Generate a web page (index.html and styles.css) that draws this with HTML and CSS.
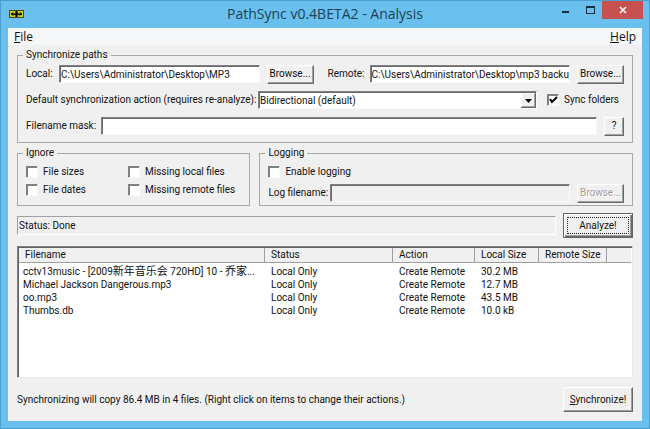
FILE: index.html
```html
<!DOCTYPE html>
<html lang="en">
<head>
    <meta charset="UTF-8">
    <meta name="viewport" content="width=device-width, initial-scale=1.0">
    <title>PathSync v0.4BETA2 - Analysis</title>
    <link rel="stylesheet" href="styles.css">
</head>
<body>
    <div class="window">
        <header class="titlebar">
            <svg class="app-icon" width="15" height="8" viewBox="0 0 15 8">
                <rect width="15" height="8" fill="#4a4a14"/>
                <path d="M1 1h5v6H1zM9 1h5v6H9z" fill="#d0ce22"/>
                <path d="M3 2h2v1H3zM3 5h2v1H3zM10 2h2v1h-2zM10 5h2v1h-2z" fill="#8f8d20"/>
                <path d="M2 3h11v2H2zM7 1h1v6H7z" fill="#111"/>
                <path d="M4 3h2v1H4zM9 3h2v1H9z" fill="#6f6d18"/>
            </svg>
            <h1 class="title">PathSync v0.4BETA2 - Analysis</h1>
            <div class="window-buttons">
                <button type="button" class="win-btn" aria-label="Minimize">
                    <svg width="8" height="8" viewBox="0 0 8 8"><path d="M0 5h7v2H0z" fill="#14303f"/></svg>
                </button>
                <button type="button" class="win-btn" aria-label="Maximize">
                    <svg width="9" height="8" viewBox="0 0 9 8"><path d="M0 0h9v8H0zM1 2v5h7V2z" fill="#14303f" fill-rule="evenodd"/></svg>
                </button>
                <button type="button" class="win-btn close" aria-label="Close">
                    <svg width="8" height="8" viewBox="0 0 8 8"><path d="M1 1l6 6M7 1L1 7" stroke="#fff" stroke-width="1.6"/></svg>
                </button>
            </div>
        </header>

        <main class="client">
            <nav class="menu">
                <button type="button"><u>F</u>ile</button>
                <button type="button"><u>H</u>elp</button>
            </nav>

            <form class="content">
                <fieldset class="group paths">
                    <legend>Synchronize paths</legend>
                    <div class="row">
                        <label class="local-label" for="local">Local:</label>
                        <input class="field" type="text" id="local" value="C:\Users\Administrator\Desktop\MP3">
                        <button type="button" class="btn browse">Browse...</button>
                        <label class="remote-label" for="remote">Remote:</label>
                        <input class="field" type="text" id="remote" value="C:\Users\Administrator\Desktop\mp3 backup">
                        <button type="button" class="btn browse">Browse...</button>
                    </div>
                    <div class="row">
                        <label class="action-label" for="action">Default synchronization action (requires re-analyze):</label>
                        <select class="field" id="action">
                            <option>Bidirectional (default)</option>
                        </select>
                        <label class="check sync-folders"><input type="checkbox" checked>Sync folders</label>
                    </div>
                    <div class="row">
                        <label class="mask-label" for="mask">Filename mask:</label>
                        <input class="field" type="text" id="mask">
                        <button type="button" class="btn help">?</button>
                    </div>
                </fieldset>

                <div class="groups">
                    <fieldset class="group ignore">
                        <legend>Ignore</legend>
                        <div class="checks">
                            <label class="check"><input type="checkbox">File sizes</label>
                            <label class="check"><input type="checkbox">Missing local files</label>
                            <label class="check"><input type="checkbox">File dates</label>
                            <label class="check"><input type="checkbox">Missing remote files</label>
                        </div>
                    </fieldset>
                    <fieldset class="group logging">
                        <legend>Logging</legend>
                        <label class="check"><input type="checkbox">Enable logging</label>
                        <div class="row">
                            <label class="log-label" for="log">Log filename:</label>
                            <input class="field" type="text" id="log" disabled>
                            <button type="button" class="btn browse" disabled>Browse...</button>
                        </div>
                    </fieldset>
                </div>

                <div class="status-row">
                    <div class="status">Status: Done</div>
                    <button type="button" class="btn large default"><span>Analyze!</span></button>
                </div>

                <div class="list">
                    <table>
                        <colgroup>
                            <col class="col-name">
                            <col class="col-status">
                            <col class="col-action">
                            <col class="col-local">
                            <col class="col-remote">
                            <col>
                        </colgroup>
                        <thead>
                            <tr><th>Filename</th><th>Status</th><th>Action</th><th>Local Size</th><th>Remote Size</th><th></th></tr>
                        </thead>
                        <tbody>
                            <tr><td>cctv13music - [2009<span class="cjk">新年音乐会</span> 720HD] 10 - <span class="cjk">乔家</span>...</td><td>Local Only</td><td>Create Remote</td><td>30.2 MB</td><td></td><td></td></tr>
                            <tr><td>Michael Jackson Dangerous.mp3</td><td>Local Only</td><td>Create Remote</td><td>12.7 MB</td><td></td><td></td></tr>
                            <tr><td>oo.mp3</td><td>Local Only</td><td>Create Remote</td><td>43.5 MB</td><td></td><td></td></tr>
                            <tr><td>Thumbs.db</td><td>Local Only</td><td>Create Remote</td><td>10.0 kB</td><td></td><td></td></tr>
                        </tbody>
                    </table>
                </div>

                <div class="footer">
                    <span>Synchronizing will copy 86.4 MB in 4 files. (Right click on items to change their actions.)</span>
                    <button type="button" class="btn large"><span><u>S</u>ynchronize!</span></button>
                </div>
            </form>
        </main>
    </div>
</body>
</html>
```
FILE: styles.css
```css
* {
    box-sizing: border-box;
}

body {
    margin: 0;
    font: 10px/14px Roboto, "Noto Sans CJK SC", sans-serif;
    color: #111;
}

button,
input,
select {
    font: inherit;
    color: inherit;
    margin: 0;
}

.window {
    display: flex;
    flex-direction: column;
    min-height: 100vh;
    padding: 0 6px 7px;
    border: 1px solid #4a9fcf;
    background: #69c0ee;
}

/* title bar */
.titlebar {
    display: grid;
    grid-template-columns: 1fr auto 1fr;
    height: 27px;
}

.app-icon {
    margin: 9px 0 0 2px;
}

.title {
    margin: 0;
    font: 14px/26px "Open Sans", "Noto Sans", sans-serif;
    color: #1d4155;
}

.window-buttons {
    display: flex;
    justify-content: flex-end;
}

.win-btn {
    display: flex;
    align-items: center;
    justify-content: center;
    width: 24px;
    height: 18px;
    padding: 0;
    border: 0;
    background: none;
}

.win-btn.close {
    width: 41px;
    background: #c75050;
}

/* client area */
.client {
    flex: 1;
    display: flex;
    flex-direction: column;
    margin: 0 1px;
    background: #f0f0f0;
}

.menu {
    display: flex;
    justify-content: space-between;
    height: 17px;
    padding: 0 6px;
    background: #f5f6f7;
}

.menu button {
    padding: 0;
    border: 0;
    background: none;
    font: 12px/18px "Open Sans", "Noto Sans", sans-serif;
}

.content {
    flex: 1;
    display: flex;
    flex-direction: column;
    padding: 3px 9px 9px;
}

.group {
    min-width: 0;
    margin: 0;
    padding: 3px 8px 7px;
    border: 1px solid #a8a8a8;
}

.group legend {
    margin-left: -3px;
    padding: 0 3px;
}

.row {
    display: flex;
    align-items: center;
    height: 18px;
}

.row + .row {
    margin-top: 8px;
}

.field {
    flex: 1;
    min-width: 0;
    height: 18px;
    padding: 1px 0 0 1px;
    border: 1px solid;
    border-color: #808080 #fafafa #fafafa #808080;
    border-radius: 0;
    box-shadow: inset 1px 1px #6a6a6a;
    background: #fff;
    outline: 0;
}

.field:disabled {
    background: #f0f0f0;
}

select.field {
    appearance: none;
    background: #fff url("data:image/svg+xml,%3Csvg xmlns='http://www.w3.org/2000/svg' width='15' height='15'%3E%3Cpath d='M0 0h15v15H0z' fill='%23696969'/%3E%3Cpath d='M0 0h14v14H0z' fill='%23fff'/%3E%3Cpath d='M1 1h13v13H1z' fill='%23a0a0a0'/%3E%3Cpath d='M1 1h12v12H1z' fill='%23f0f0f0'/%3E%3Cpath d='M4 6h7L7.500 10z' fill='%23000'/%3E%3C/svg%3E") no-repeat right center;
}

.local-label { width: 33px; }
.remote-label { width: 42px; margin-left: 14px; }
.action-label { width: 232px; }
.mask-label { width: 75px; }
.log-label { width: 62px; }

label {
    flex: none;
    white-space: nowrap;
}

.btn {
    flex: none;
    height: 19px;
    padding: 0;
    border: 1px solid;
    border-color: #fff #696969 #696969 #fff;
    box-shadow: inset -1px -1px #a0a0a0;
    background: #f0f0f0;
}

.btn:disabled {
    color: #a0a0a0;
    text-shadow: 1px 1px #fff;
}

.browse {
    width: 47px;
    margin-left: 7px;
}

.help {
    width: 20px;
    margin-left: 7px;
}

.large {
    width: 70px;
    height: 25px;
}

.default {
    padding: 1px;
    border-color: #646464;
    box-shadow: inset 1px 1px #fff, inset -1px -1px #696969, inset -2px -2px #a0a0a0;
}

.default span {
    display: block;
    margin: 0 2px;
    border: 1px dotted #222;
    line-height: 15px;
}

.check {
    display: flex;
    align-items: center;
    gap: 5px;
}

.check input {
    flex: none;
    appearance: none;
    width: 12px;
    height: 12px;
    border: 1px solid;
    border-color: #808080 #fafafa #fafafa #808080;
    box-shadow: inset 1px 1px #808080;
    background: #fff;
}

.check input:checked {
    background: #fff url("data:image/svg+xml,%3Csvg xmlns='http://www.w3.org/2000/svg' width='10' height='10'%3E%3Cpath d='M2 4l2 3 5-5' fill='none' stroke='%23000' stroke-width='2'/%3E%3C/svg%3E") center no-repeat;
}

.sync-folders {
    width: 77px;
    margin-left: 10px;
}

/* ignore + logging */
.groups {
    display: grid;
    grid-template-columns: 233fr 373fr;
    gap: 9px;
    margin-top: 3px;
}

.groups .group {
    padding-top: 5px;
    padding-bottom: 3px;
}

.checks {
    display: grid;
    grid-template-columns: 102px 1fr;
    gap: 4px 0;
}

.logging .row {
    margin-top: 5px;
}

.status-row,
.footer {
    display: flex;
    align-items: center;
    justify-content: space-between;
    gap: 7px;
}

.status-row {
    margin: 7px 0 8px;
}

.status {
    flex: 1;
    height: 19px;
    padding: 2px 1px;
    border: 1px solid;
    border-color: #a0a0a0 #fff #fff #a0a0a0;
}

/* file list */
.list {
    flex: 1;
    border: 1px solid;
    border-color: #808080 #e8e8e8 #e8e8e8 #808080;
    box-shadow: inset 1px 1px #606060;
    padding: 1px;
    background: #fff;
}

table {
    width: 100%;
    table-layout: fixed;
    border-collapse: separate;
    border-spacing: 0;
}

.col-name { width: 246px; }
.col-status { width: 128px; }
.col-action { width: 82px; }
.col-local { width: 64px; }
.col-remote { width: 68px; }

th {
    height: 15px;
    padding: 0 0 0 6px;
    border-right: 1px solid #a0a0a0;
    border-bottom: 1px solid #a0a0a0;
    background: #f0f0f0;
    font-weight: normal;
    text-align: left;
    white-space: nowrap;
}

th:last-child {
    border-right: 0;
}

td {
    height: 13px;
    padding: 0 0 0 6px;
    line-height: 13px;
    overflow: hidden;
    white-space: nowrap;
    text-overflow: ellipsis;
}

td:first-child {
    padding-left: 4px;
}

.cjk {
    font-size: 11px;
    line-height: 12px;
}

tbody::before {
    content: "";
    display: block;
    height: 2px;
}

.footer {
    margin-top: 9px;
}
```
